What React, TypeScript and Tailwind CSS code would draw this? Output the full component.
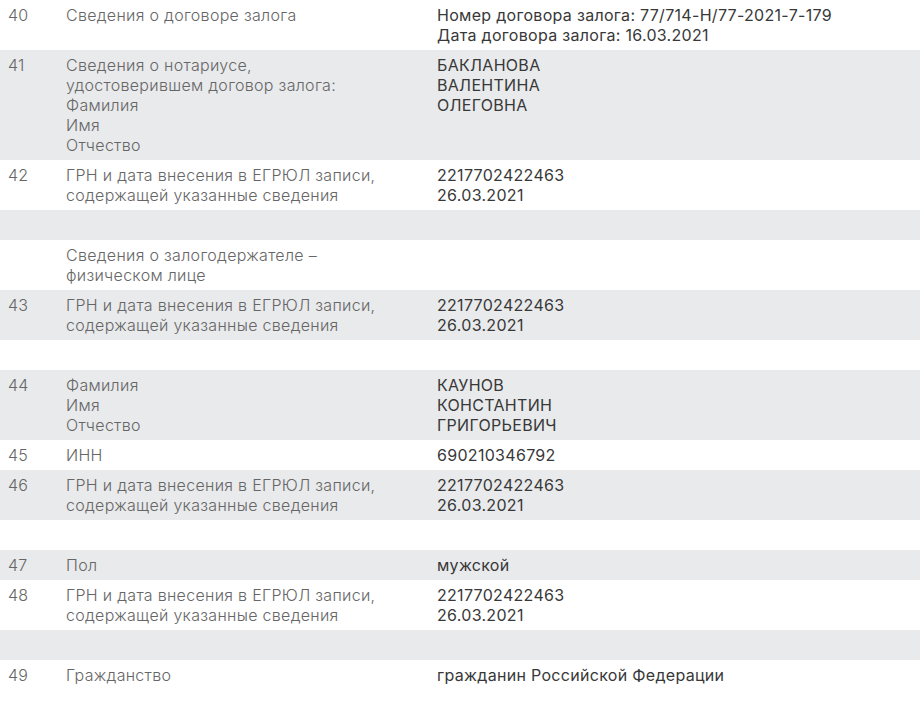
type Row = {
  num?: string;
  label: string[];
  value: string[];
};

const rows: Row[] = [
  {
    num: '40',
    label: ['Сведения о договоре залога'],
    value: ['Номер договора залога: 77/714-Н/77-2021-7-179', 'Дата договора залога: 16.03.2021'],
  },
  {
    num: '41',
    label: ['Сведения о нотариусе,', 'удостоверившем договор залога:', 'Фамилия', 'Имя', 'Отчество'],
    value: ['БАКЛАНОВА', 'ВАЛЕНТИНА', 'ОЛЕГОВНА'],
  },
  {
    num: '42',
    label: ['ГРН и дата внесения в ЕГРЮЛ записи,', 'содержащей указанные сведения'],
    value: ['2217702422463', '26.03.2021'],
  },
  { label: [], value: [] },
  { label: ['Сведения о залогодержателе –', 'физическом лице'], value: [] },
  {
    num: '43',
    label: ['ГРН и дата внесения в ЕГРЮЛ записи,', 'содержащей указанные сведения'],
    value: ['2217702422463', '26.03.2021'],
  },
  { label: [], value: [] },
  {
    num: '44',
    label: ['Фамилия', 'Имя', 'Отчество'],
    value: ['КАУНОВ', 'КОНСТАНТИН', 'ГРИГОРЬЕВИЧ'],
  },
  { num: '45', label: ['ИНН'], value: ['690210346792'] },
  {
    num: '46',
    label: ['ГРН и дата внесения в ЕГРЮЛ записи,', 'содержащей указанные сведения'],
    value: ['2217702422463', '26.03.2021'],
  },
  { label: [], value: [] },
  { num: '47', label: ['Пол'], value: ['мужской'] },
  {
    num: '48',
    label: ['ГРН и дата внесения в ЕГРЮЛ записи,', 'содержащей указанные сведения'],
    value: ['2217702422463', '26.03.2021'],
  },
  { label: [], value: [] },
  { num: '49', label: ['Гражданство'], value: ['гражданин Российской Федерации'] },
];

function Lines({ items }: { items: string[] }) {
  if (!items.length) return <div>&nbsp;</div>;
  return (
    <>
      {items.map((t, i) => (
        <div key={i} className="whitespace-nowrap">{t}</div>
      ))}
    </>
  );
}

export default function App() {
  return (
    <div className="w-[920px] min-h-[703px] bg-white font-['Inter',sans-serif] text-[16px] leading-5 tracking-[0.3px]">
      {rows.map((r, i) => (
        <div
          key={i}
          className={`grid grid-cols-[58px_371px_1fr] py-[5px] ${i % 2 === 1 ? 'bg-[#e9eaec]' : 'bg-white'}`}
        >
          <div className="px-2 font-light text-[#666666]">{r.num ?? '\u00a0'}</div>
          <div className="px-2 font-light text-[#666666]">
            <Lines items={r.label} />
          </div>
          <div className="px-2 text-[#383838]">
            <Lines items={r.value} />
          </div>
        </div>
      ))}
    </div>
  );
}
